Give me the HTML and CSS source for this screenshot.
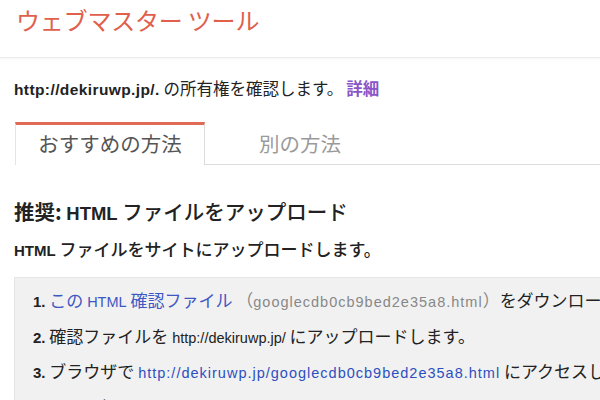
FILE: index.html
```html
<!DOCTYPE html>
<html lang="ja">
<head>
<meta charset="utf-8">
<title>ウェブマスター ツール</title>
<link rel="stylesheet" href="styles.css">
</head>
<body>
<header class="header">
  <h1 class="title">ウェブマスター ツール</h1>
</header>
<main class="content">
  <p class="owner"><span class="en b">http://dekiruwp.jp/.</span> の所有権を確認します。<a class="more" href="#">詳細</a></p>
  <div class="tabs">
    <div class="tab active">おすすめの方法</div>
    <div class="tab">別の方法</div>
    <div class="tab-rest"></div>
  </div>
  <h3 class="heading"><strong>推奨:</strong> <span class="en-h">HTML</span> ファイルをアップロード</h3>
  <p class="desc"><span class="en">HTML</span> ファイルをサイトにアップロードします。</p>
  <ol class="steps">
    <li><span class="num">1.</span> <a class="link" href="#">この <span class="en">HTML</span> 確認ファイル</a> <span class="file">（<span class="code">googlecdb0cb9bed2e35a8.html</span>）</span>をダウンロードします。</li>
    <li><span class="num">2.</span> 確認ファイルを <span class="en">http://dekiruwp.jp/</span> にアップロードします。</li>
    <li><span class="num">3.</span> ブラウザで <a class="url" href="#">http://dekiruwp.jp/googlecdb0cb9bed2e35a8.html</a> にアクセスして、アップロードが完了したことを確認します。</li>
    <li><span class="num">4.</span> 下の [確認] をクリックします。</li>
  </ol>
</main>
</body>
</html>
```

FILE: styles.css
```css
html, body {
  margin: 0;
  padding: 0;
  background: #fff;
  overflow: hidden;
}
body {
  font-family: "Liberation Sans", "Noto Sans CJK JP", sans-serif;
  color: #222;
  width: 600px;
  height: 400px;
}
.header {
  height: 57px;
  border-bottom: 1px solid #ebebeb;
  box-shadow: 0 1px 2px rgba(0,0,0,0.04);
  padding-left: 16px;
}
.title {
  margin: 0;
  font-family: "Noto Sans CJK JP", sans-serif;
  font-weight: 400;
  font-size: 24px;
  line-height: 40px;
  color: #e0604c;
  letter-spacing: -0.2px;
}
.content {
  padding-left: 14px;
}
.en { font-family: "Liberation Sans", sans-serif; font-size: 14.5px; line-height: 1; }
.b { font-weight: 700; }
.owner {
  margin: 20px 0 0;
  height: 20px;
  font-family: "Noto Sans CJK JP", sans-serif;
  font-size: 16.5px;
  line-height: 20px;
  color: #222;
  white-space: nowrap;
}
.owner .en { font-size: 15.5px; letter-spacing: 0.4px; }
.more {
  color: #8a55c8;
  font-weight: 700;
  text-decoration: none;
  margin-left: 3px;
}
.tabs {
  display: flex;
  margin: 24px 0 0 1px;
  height: 43px;
}
.tab {
  width: 190px;
  box-sizing: border-box;
  padding-top: 3px;
  padding-bottom: 4px;
  line-height: 36px;
  text-align: center;
  font-family: "Noto Sans CJK JP", sans-serif;
  font-size: 20.5px;
  color: #9a9a9a;
  border-bottom: 1px solid #dcdcdc;
}
.tab.active {
  color: #555;
  border-top: 3px solid #e06a55;
  border-left: 1px solid #e4e4e4;
  border-right: 1px solid #dcdcdc;
  border-bottom: none;
  padding-top: 0;
}
.tab-rest {
  flex: 1;
  border-bottom: 1px solid #dcdcdc;
}
.heading {
  margin: 34px 0 0;
  height: 24px;
  font-family: "Noto Sans CJK JP", sans-serif;
  font-size: 20.5px;
  line-height: 24px;
  font-weight: 500;
  color: #222;
  white-space: nowrap;
}
.heading strong { font-weight: 700; }
.en-h { font-family: "Liberation Sans", sans-serif; font-size: 18.5px; font-weight: 700; line-height: 1; }
.desc {
  margin: 16px 0 0;
  height: 20px;
  font-family: "Noto Sans CJK JP", sans-serif;
  font-size: 17px;
  line-height: 20px;
  font-weight: 500;
  white-space: nowrap;
}
.desc .en { font-size: 15px; font-weight: 700; }
.steps {
  list-style: none;
  margin: 18px 0 0;
  padding: 4px 0 0 18px;
  background: #f1f1f1;
  border-top: 1px solid #e6e6e6;
  border-left: 1px solid #e6e6e6;
  overflow: hidden;
  font-family: "Noto Sans CJK JP", sans-serif;
  font-size: 17px;
  line-height: 35.5px;
  white-space: nowrap;
  color: #222;
}
.steps li {
  height: 35.5px;
  overflow: hidden;
}
.num {
  font-family: "Liberation Sans", sans-serif;
  font-weight: 700;
  font-size: 15px;
  line-height: 1;
}
.link, .url {
  color: #3f57c4;
  text-decoration: none;
}
.url, .code {
  font-family: "Liberation Sans", sans-serif;
  font-size: 14.5px;
  letter-spacing: 1px;
  line-height: 1;
}
.url { color: #2d4fbf; }
.file { color: #888; }
```
